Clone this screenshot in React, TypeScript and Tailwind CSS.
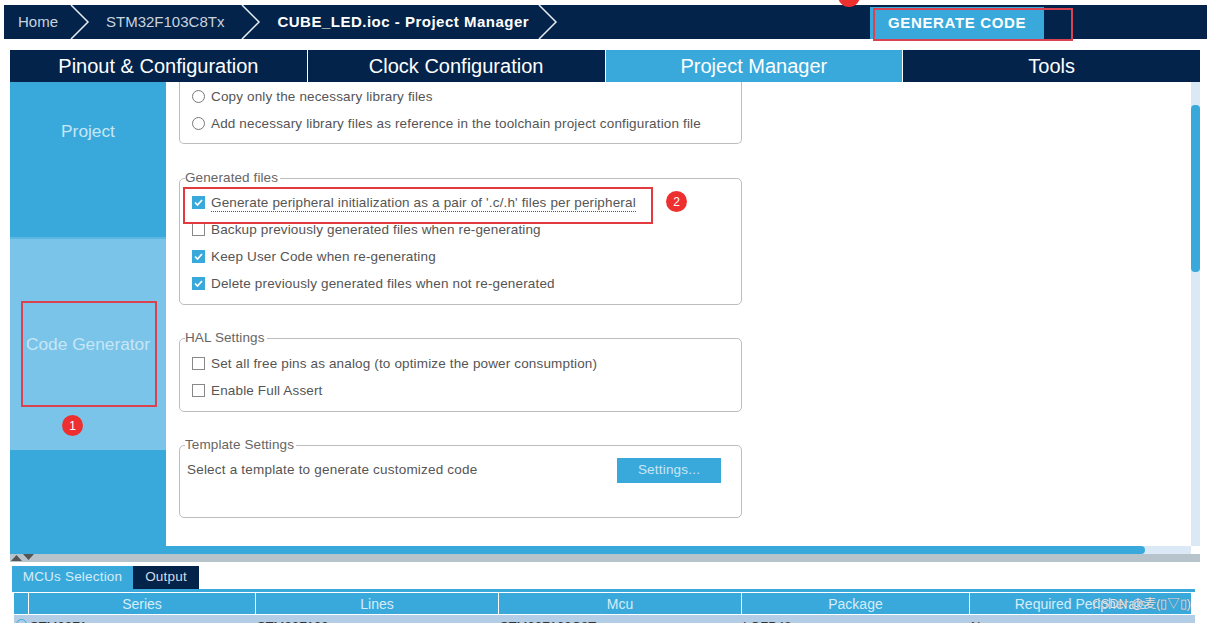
const font = { fontFamily: '"Liberation Sans", Arial, sans-serif' };

function Chevron() {
  return (
    <svg width="20" height="34" viewBox="0 0 20 34" className="shrink-0" fill="none">
      <path d="M1 0 L18 17 L1 34" stroke="#e8eef4" strokeWidth="1.5" />
    </svg>
  );
}

function Check({ on, radio }: { on?: boolean; radio?: boolean }) {
  if (radio) {
    return <span className="w-[13px] h-[13px] rounded-full border border-[#777] bg-white shrink-0" />;
  }
  if (!on) {
    return <span className="w-[13px] h-[13px] border border-[#888] bg-white shrink-0" />;
  }
  return (
    <span className="w-[13px] h-[13px] bg-[#39a9dc] shrink-0 flex items-center justify-center">
      <svg width="11" height="11" viewBox="0 0 11 11" fill="none">
        <path d="M2 5.5 L4.5 8 L9 3" stroke="#fff" strokeWidth="1.7" />
      </svg>
    </span>
  );
}

function Option({ label, on, radio, dotted }: { label: string; on?: boolean; radio?: boolean; dotted?: boolean }) {
  return (
    <div className="h-[27px] ml-[5px] flex items-center gap-[6px] text-[13.5px] tracking-[0.15px] text-[#555] whitespace-nowrap">
      <Check on={on} radio={radio} />
      <span className={dotted ? 'border-b border-dotted border-[#555] leading-[17px]' : 'leading-[17px]'}>{label}</span>
    </div>
  );
}

function Group({ title, className, children }: { title: string; className: string; children: React.ReactNode }) {
  return (
    <fieldset className={`border border-[#bdbdbd] rounded-[5px] w-[563px] ml-[13px] px-[7px] ${className}`}>
      <legend className="text-[13.5px] leading-[14px] tracking-[0.1px] text-[#666] ml-[-2px] pr-[2px]">{title}</legend>
      {children}
    </fieldset>
  );
}

function Badge({ n, className }: { n: number; className: string }) {
  return (
    <span className={`absolute w-[21px] h-[21px] rounded-full bg-[#ee2f2f] text-white text-[12px] flex items-center justify-center ${className}`}>
      {n}
    </span>
  );
}

const tabs = ['Pinout & Configuration', 'Clock Configuration', 'Project Manager', 'Tools'];

const columns = [
  { name: 'Series', width: 'w-[226px]', cell: 'STM32F1' },
  { name: 'Lines', width: 'w-[242px]', cell: 'STM32F103' },
  { name: 'Mcu', width: 'w-[242px]', cell: 'STM32F103C8Tx' },
  { name: 'Package', width: 'w-[227px]', cell: 'LQFP48' },
  { name: 'Required Peripherals', width: 'w-[221px]', cell: 'None' },
];

export default function App() {
  return (
    <div className="relative w-[1207px] h-[623px] overflow-hidden bg-white pt-[5px]" style={font}>
      {/* breadcrumb bar */}
      <div className="ml-[4px] h-[34px] bg-[#03234b] flex items-center text-[#c9d3de] text-[15px]">
        <span className="ml-[14px] mr-[12px]">Home</span>
        <Chevron />
        <span className="ml-[16px] mr-[17px]">STM32F103C8Tx</span>
        <Chevron />
        <span className="ml-[16px] mr-[9px] font-bold text-white tracking-[0.5px]">CUBE_LED.ioc - Project Manager</span>
        <Chevron />
        <div className="ml-auto mr-[163px] w-[174px] h-[32px] self-end bg-[#39a9dc] text-white font-bold text-[15px] tracking-[0.65px] flex items-center pl-[18px]">
          GENERATE CODE
        </div>
      </div>

      <div className="mt-[11px] ml-[10px] w-[1190px]">
        {/* main tabs */}
        <div className="grid grid-cols-4 gap-px h-[32px] bg-white">
          {tabs.map((t, i) => (
            <div
              key={t}
              className={`flex items-center justify-center text-[20px] text-white ${i === 2 ? 'bg-[#39a9dc]' : 'bg-[#03234b]'}`}
            >
              {t}
            </div>
          ))}
        </div>

        <div className="flex h-[464px]">
          {/* side menu */}
          <div className="w-[156px] shrink-0 flex flex-col bg-[#39a9dc] text-[#c7e6f6] text-[17.3px]">
            <div className="h-[155px] flex items-center justify-center pb-[55px]">Project</div>
            <div className="h-[213px] bg-[#7ac4e9] border-t-2 border-[#5cb6e2] flex items-center justify-center whitespace-nowrap">
              Code Generator
            </div>
          </div>

          {/* project manager content */}
          <div className="flex-1 min-w-0 relative">
            <div className="border border-t-0 border-[#bdbdbd] rounded-b-[5px] w-[563px] ml-[13px] h-[62px] px-[7px] pt-px">
              <Option radio label="Copy only the necessary library files" />
              <Option radio label="Add necessary library files as reference in the toolchain project configuration file" />
            </div>

            <Group title="Generated files" className="mt-[27px] h-[134px] pt-[4px]">
              <Option on dotted label="Generate peripheral initialization as a pair of '.c/.h' files per peripheral" />
              <Option label="Backup previously generated files when re-generating" />
              <Option on label="Keep User Code when re-generating" />
              <Option on label="Delete previously generated files when not re-generated" />
            </Group>

            <Group title="HAL Settings" className="mt-[26px] h-[81px] pt-[5px]">
              <Option label="Set all free pins as analog (to optimize the power consumption)" />
              <Option label="Enable Full Assert" />
            </Group>

            <Group title="Template Settings" className="mt-[26px] h-[80px] pt-[3px]">
              <div className="flex items-center justify-between pr-[13px] h-[30px] text-[13.5px] tracking-[0.2px] text-[#555]">
                <span>Select a template to generate customized code</span>
                <span className="w-[104px] h-[25px] bg-[#39a9dc] text-[#c7e6f6] flex items-center justify-center">Settings...</span>
              </div>
            </Group>

            {/* vertical scroll */}
            <div className="absolute right-0 top-0 bottom-0 w-[9px] bg-[#dbe9f6]">
              <div className="mt-[23px] h-[167px] rounded-[4px] bg-[#39a9dc]" />
            </div>
          </div>
        </div>

        {/* horizontal scroll */}
        <div className="h-[8px] bg-[#dbe9f6] mr-[9px]">
          <div className="w-[1135px] h-full rounded-r-[4px] bg-[#39a9dc]" />
        </div>
        {/* split handle */}
        <div className="h-[8px] bg-[#b8c4cc] flex items-start gap-[1px] pl-[1px]">
          <svg width="11" height="8" viewBox="0 0 11 8"><path d="M0 7 L5.5 1 L11 7 Z" fill="#555" /></svg>
          <svg width="11" height="8" viewBox="0 0 11 8"><path d="M0 0 L11 0 L5.5 6 Z" fill="#555" /></svg>
        </div>
      </div>

      {/* bottom panel */}
      <div className="mt-[4px] ml-[12px] w-[1183px]">
        <div className="flex h-[23px] text-[13.5px] tracking-[0.2px]">
          <div className="w-[121px] bg-[#39a9dc] text-[#d5edf8] flex items-center justify-center">MCUs Selection</div>
          <div className="w-[66px] bg-[#03234b] text-[#d5dde6] flex items-center justify-center">Output</div>
        </div>
        <div className="h-[3px] bg-[#39a9dc]" />
        <div className="flex mt-px ml-[2px] gap-[1px] h-[21px]">
          <div className="w-[14px] bg-[#39a9dc]" />
          {columns.map((c) => (
            <div key={c.name} className={`${c.width} bg-[#39a9dc] text-[#d5edf8] text-[14px] pt-[2px] flex items-center justify-center whitespace-nowrap`}>
              {c.name}
            </div>
          ))}
        </div>
        <div className="flex ml-[2px] gap-[1px] h-[20px] mt-px bg-[#b4cde6] text-[13px] text-[#333]">
          <div className="w-[14px] flex justify-center pt-[4px]">
            <span className="w-[11px] h-[11px] rounded-full border border-[#39a9dc]" />
          </div>
          {columns.map((c) => (
            <div key={c.name} className={`${c.width} pl-px pt-[2px] whitespace-nowrap`}>{c.cell}</div>
          ))}
        </div>
      </div>

      {/* annotations drawn over the screenshot */}
      <div className="absolute left-[873px] top-[8px] w-[200px] h-[33px] border-2 border-[#d9424e]" />
      <div className="absolute left-[21px] top-[301px] w-[136px] h-[106px] border-2 border-[#d9424e]" />
      <div className="absolute left-[183px] top-[187px] w-[470px] h-[37px] border-2 border-[#e23a3f]" />
      <Badge n={1} className="left-[62px] top-[415px]" />
      <Badge n={2} className="left-[666px] top-[191px]" />
      <span className="absolute left-[838px] top-[-15px] w-[22px] h-[22px] rounded-full bg-[#ee2f2f]" />
      <span className="absolute right-[16px] top-[595px] text-[12.5px] text-[#e3e9ed] [text-shadow:0_0_1px_#667] whitespace-nowrap" style={{ fontFamily: '"Liberation Sans", "Noto Sans CJK SC", sans-serif' }}>
        CSDN @麦(▯▽▯)
      </span>
    </div>
  );
}
